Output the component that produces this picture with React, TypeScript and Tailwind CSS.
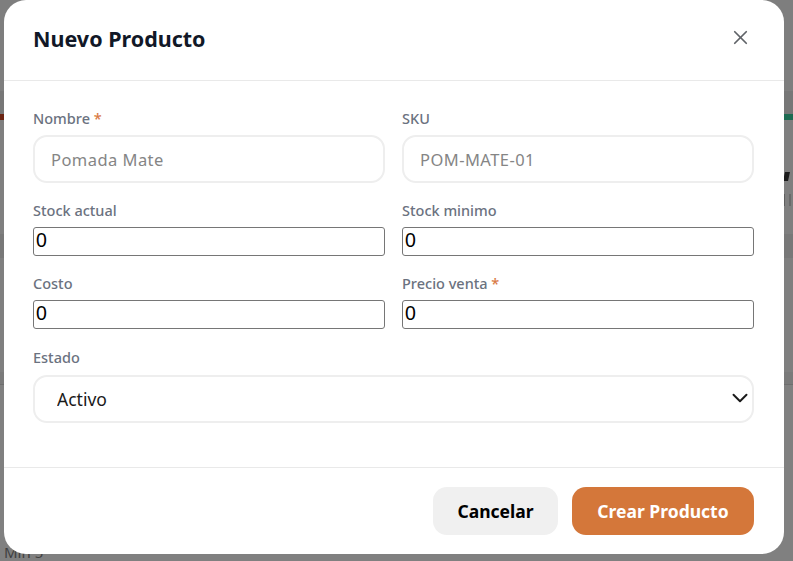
import * as React from 'react';
import { ChevronDown, X } from 'lucide-react';

const uiFont = "font-['Noto_Sans','Open_Sans',sans-serif]";

function Field({ label, required, children, className }: { label: string; required?: boolean; children: React.ReactNode; className?: string }) {
  return (
    <div className={`flex flex-col ${className ?? ''}`}>
      <label className="mb-[4px] h-[22px] text-[14.5px] leading-[19px] font-medium text-[#6b7280]">
        {label}
        {required ? <span className="text-[#d97a45]"> *</span> : null}
      </label>
      {children}
    </div>
  );
}

function TextField({ placeholder }: { placeholder: string }) {
  return (
    <input
      placeholder={placeholder}
      className="h-[48px] w-full rounded-[14px] border-2 border-[#eeeeee] bg-white px-[16px] text-[16.5px] tracking-[0.45px] text-[#1a1a1a] outline-none placeholder:text-[#858585]"
    />
  );
}

function NumberField() {
  return (
    <input
      type="text"
      defaultValue="0"
      className="h-[29px] w-full rounded-[3px] border border-[#767676] bg-white px-[2px] pb-[1px] font-['Liberation_Sans',sans-serif] text-[19.5px] text-black outline-none"
    />
  );
}

export default function App() {
  return (
    <div className={`relative h-[561px] w-[793px] overflow-hidden bg-[#808080] ${uiFont}`}>
      {/* page behind the overlay */}
      <div className="flex h-full flex-col">
        <div className="h-[92px] bg-[#7e7e7e]" />
        <div className="h-[23px] bg-[#777777]" />
        <div className="flex h-[6px] justify-between">
          <div className="w-[6px] bg-[#6b2412]" />
          <div className="w-[12px] bg-[#1d6b52]" />
        </div>
        <div className="flex h-[115px] flex-col items-end bg-[#7f7f7f] pt-[52px]">
          <div className="flex h-[9px] w-[9px] justify-start">
            <div className="h-[9px] w-[5px] -skew-x-12 bg-[#1c1c1c]" />
          </div>
          <div className="mt-[13px] flex h-[12px] w-[9px] gap-[4px]">
            <div className="h-[12px] w-[1px] bg-[#5e5e5e]" />
            <div className="h-[12px] w-[2px] bg-[#6a6a6a]" />
          </div>
        </div>
        <div className="h-[24px] bg-[#787878]" />
        <div className="h-[116px] bg-[#7f7f7f]" />
        <div className="h-[12px] bg-[#7a7a7a]" />
        <div className="h-[1px] bg-[#6e6e6e]" />
        <div className="flex-1 pt-[158px] pl-[4px] text-[15px] leading-[18px] text-[#3f3f3f]">Min 5</div>
      </div>

      {/* modal */}
      <div className="absolute top-0 left-[4px] flex h-[554px] w-[780px] flex-col rounded-[22px] bg-white">
        <div className="flex h-[81px] items-center justify-between border-b border-[#e9e9e9] pr-[32px] pl-[29px]">
          <h2 className="-mt-[1px] text-[21.5px] font-bold text-[#111827]">Nuevo Producto</h2>
          <button className="-mt-[5px] text-[#5f6368]">
            <X size={23} strokeWidth={1.8} />
          </button>
        </div>

        <div className="flex-1 pt-[28px] pr-[30px] pl-[29px]">
          <div className="grid grid-cols-2 gap-x-[17px] gap-y-[18px]">
            <Field label="Nombre" required>
              <TextField placeholder="Pomada Mate" />
            </Field>
            <Field label="SKU">
              <TextField placeholder="POM-MATE-01" />
            </Field>
            <Field label="Stock actual">
              <NumberField />
            </Field>
            <Field label="Stock minimo">
              <NumberField />
            </Field>
            <Field label="Costo">
              <NumberField />
            </Field>
            <Field label="Precio venta" required>
              <NumberField />
            </Field>
            <Field label="Estado" className="col-span-2 mt-[1px]">
              <div className="relative mt-[1px]">
                <select className="h-[48px] w-full appearance-none rounded-[14px] border-2 border-[#eeeeee] bg-white px-[22px] text-[17.5px] text-[#1a1a1a] outline-none">
                  <option>Activo</option>
                  <option>Inactivo</option>
                </select>
                <ChevronDown size={26} strokeWidth={1.8} className="pointer-events-none absolute top-[10px] right-[1px] text-[#1a1a1a]" />
              </div>
            </Field>
          </div>
        </div>

        <div className="flex h-[87px] items-start justify-end gap-[14px] border-t border-[#e9e9e9] pt-[19px] pr-[30px]">
          <button className="h-[48px] w-[125px] rounded-[14px] bg-[#f0f0f0] text-[17.5px] font-bold text-black">Cancelar</button>
          <button className="h-[48px] w-[182px] rounded-[14px] bg-[#d4773a] text-[17.5px] font-bold text-white">Crear Producto</button>
        </div>
      </div>
    </div>
  );
}
